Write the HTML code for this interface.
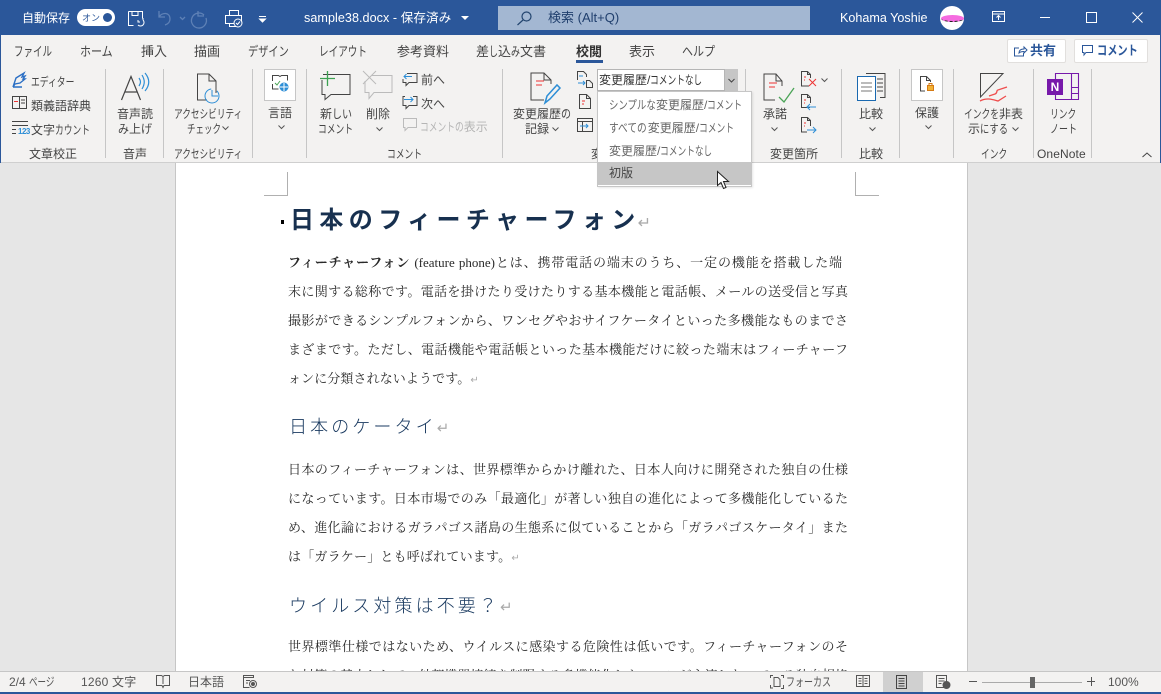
<!DOCTYPE html>
<html lang="ja"><head><meta charset="utf-8"><style>
html,body{margin:0;padding:0}
body{width:1161px;height:694px;overflow:hidden;position:relative;background:#e6e6e6;font-family:"Liberation Sans","Noto Sans CJK JP",sans-serif}
div,svg{position:absolute}
.t{white-space:nowrap;font-size:12px;line-height:16px;color:#444;letter-spacing:0}
.k{display:inline-block;width:calc(var(--n)*var(--w,8.75)*1px);white-space:nowrap}
.k i{display:inline-block;font-style:normal;transform-origin:0 50%;transform:scaleX(calc(var(--w,8.75)/var(--f,12)))}
.tab{--f:13;top:44px;font-size:13px;line-height:16px;color:#444;white-space:nowrap;letter-spacing:0}
.sep{width:1px;background:#c6c6c6;top:69px;height:89px}
.w{color:#fff}
.b{white-space:nowrap;left:288px;width:560px;font-family:"Liberation Serif","Noto Serif CJK SC",serif;font-size:13px;line-height:18px;color:#2a2a2a;text-align:justify;text-align-last:justify;font-weight:400}
.b b{font-weight:700}
.h{white-space:nowrap;left:289px;font-size:18px;line-height:24px;color:#1a3a60;letter-spacing:3.100px;font-weight:300}
.m{color:#aaa;font-size:10px}
svg{overflow:visible}
.ch{fill:none;stroke:#555}
</style></head><body>
<div style="left:0;top:0;width:1161px;height:35px;background:#2b579a"></div>
<div class="t w" style="left:22px;top:10px">自動保存</div>
<div style="left:77px;top:9px;width:38px;height:17px;background:#fff;border-radius:9px"></div>
<div class="t" style="left:82px;top:10px;font-size:9px;color:#2b579a">オン</div>
<div style="left:103px;top:13px;width:9px;height:9px;background:#2b579a;border-radius:50%"></div>
<svg style="left:128px;top:11px" width="16" height="16" fill="none" stroke="#fff"><path d="M.5.500h14v7M.5.500v14h5M4 .5v4h6v-4M10 14a3.500 3.500 0 0 0 5-5M15 9v-2M12 11h-2V9"/></svg>
<svg style="left:158px;top:10px" width="55" height="17" fill="none" stroke="#5e81b6" stroke-width="1.300"><path d="M1 1v6h6M1 7c3-5 11-5 11 2 0 3-2 5-5 6M22 7l2.500 2.500L27 7"/><path d="M40 1v5h6M46 5a7.500 7.500 0 1 0 2 3"/></svg>
<svg style="left:225px;top:10px" width="18" height="18" fill="none" stroke="#fff"><path d="M4.500 5V.5h9V5M.5 5.500h16v8h-16zM4.500 13.500v3h7"/><circle cx="13" cy="13" r="4" fill="#2b579a"/><path d="M11 13l1.500 1.500 2.500-3"/></svg>
<svg style="left:258px;top:16px" width="9" height="7" fill="none" stroke="#fff"><path d="M1 .5h7M1.500 3l3 3 3-3z" fill="#fff"/></svg>
<div class="t w" style="left:304px;top:10px;font-size:12.600px;letter-spacing:.05px">sample38.docx - 保存済み</div>
<svg style="left:461px;top:16px" width="8" height="5"><path d="M0 0h8L4 4z" fill="#fff"/></svg>
<div style="left:498px;top:6px;width:312px;height:24px;background:#a3b7d2"></div>
<svg style="left:517px;top:11px" width="16" height="15" fill="none" stroke="#23456f" stroke-width="1.200"><circle cx="9.500" cy="5.500" r="4.500"/><path d="M6 9l-5.500 5"/></svg>
<div class="t" style="left:548px;top:10px;color:#203f6d;font-size:13px">検索 (Alt+Q)</div>
<div class="t w" style="left:840px;top:10px;font-size:12.600px">Kohama Yoshie</div>
<div style="left:940px;top:6px;width:24px;height:24px;background:#fff;border-radius:50%"></div>
<div style="left:941px;top:15px;width:23px;height:7px;background:#f56be0;border-radius:50%;border-bottom:1px dashed #222;box-sizing:border-box"></div>
<svg style="left:992px;top:11px" width="13" height="12" fill="none" stroke="#fff"><path d="M.5.500h12v10H.500zM.5 3h12M6.500 9V4.500M4.500 6.500l2-2 2 2"/></svg>
<div style="left:1040px;top:17px;width:10px;height:1px;background:#fff"></div>
<div style="left:1086px;top:12px;width:9px;height:9px;border:1px solid #fff"></div>
<svg style="left:1132px;top:12px" width="11" height="11" stroke="#fff"><path d="M.5.500l10 10M10.500.5l-10 10"/></svg>

<div style="left:0;top:35px;width:1161px;height:127px;background:#f3f2f1;border-bottom:1px solid #cfcfcf"></div>
<div style="left:0;top:0;width:1px;height:694px;background:#2b579a"></div>
<div style="left:1160px;top:0;width:1px;height:694px;background:#2b579a"></div>

<div class="tab" style="left:14px"><span class="k" style="--n:4;--w:9.500"><i>ファイル</i></span></div>
<div class="tab" style="left:80px"><span class="k" style="--n:3;--w:11"><i>ホーム</i></span></div>
<div class="tab" style="left:141px">挿入</div>
<div class="tab" style="left:194px">描画</div>
<div class="tab" style="left:248px"><span class="k" style="--n:4;--w:10.200"><i>デザイン</i></span></div>
<div class="tab" style="left:319px"><span class="k" style="--n:5;--w:9.600"><i>レイアウト</i></span></div>
<div class="tab" style="left:397px">参考資料</div>
<div class="tab" style="left:476px">差<span class="k" style="--n:1;--w:9"><i>し</i></span>込<span class="k" style="--n:1;--w:9"><i>み</i></span>文書</div>
<div class="tab" style="left:576px;font-weight:700;color:#333">校閲</div>
<div style="left:576px;top:60px;width:27px;height:3px;background:#2b579a"></div>
<div class="tab" style="left:629px">表示</div>
<div class="tab" style="left:682px"><span class="k" style="--n:3;--w:11"><i>ヘルプ</i></span></div>
<div style="left:1007px;top:39px;width:57px;height:22px;background:#fff;border:1px solid #e1dfdd;border-radius:2px"></div>
<svg style="left:1014px;top:45px" width="14" height="12" fill="none" stroke="#2b579a"><path d="M5 3H.5v8h9V8M5 8c0-3 2-4 5-4V2l3 3-3 3V6.500C8 6.500 6 7 5 8z"/></svg>
<div class="t" style="left:1030px;top:43px;color:#2b579a;font-weight:700;font-size:13px">共有</div>
<div style="left:1074px;top:39px;width:72px;height:22px;background:#fff;border:1px solid #e1dfdd;border-radius:2px"></div>
<svg style="left:1082px;top:45px" width="12" height="12" fill="none" stroke="#2b579a"><path d="M.5.500h10v7H4L2 10V7.500H.5z"/></svg>
<div class="t" style="left:1097px;top:43px;color:#2b579a;font-weight:700;font-size:13px;--f:13"><span class="k" style="--n:4;--w:10.200"><i>コメント</i></span></div>

<div class="sep" style="left:105px"></div><div class="sep" style="left:163px"></div><div class="sep" style="left:252px"></div><div class="sep" style="left:306px"></div><div class="sep" style="left:502px"></div><div class="sep" style="left:745px"></div><div class="sep" style="left:841px"></div><div class="sep" style="left:899px"></div><div class="sep" style="left:953px"></div><div class="sep" style="left:1033px"></div><div class="sep" style="left:1091px"></div>

<!-- Proofing -->
<svg style="left:12px;top:72px" width="16" height="16" fill="none" stroke="#2b6fc4" stroke-width="1.400"><path d="M1 15l3-9 8-5-2 4 3-1-2 3 2 0-5 4-5 1zM1 15h9"/></svg>
<div class="t" style="left:31px;top:74px"><span class="k" style="--n:5;--w:8.800"><i>エディター</i></span></div>
<svg style="left:12px;top:96px" width="15" height="14" fill="none" stroke="#444"><path d="M.5.500h14v12H.500zM7.500.5v12M9 4h4M9 7h4"/><path d="M2 5.500h4" stroke="#e33"/></svg>
<div class="t" style="left:31px;top:98px">類義語辞典</div>
<svg style="left:12px;top:121px" width="18" height="14"><path d="M0 .5h16M0 4.500h16M0 8.500h4M0 12.500h4" stroke="#444"/></svg>
<div class="t" style="left:18px;top:128px;font-size:8px;line-height:8px;color:#2d8ed6;font-weight:700;letter-spacing:-.5px">123</div>
<div class="t" style="left:31px;top:122px">文字<span class="k" style="--n:4"><i>カウント</i></span></div>
<div class="t" style="left:29px;top:146px">文章校正</div>

<!-- Speech -->
<svg style="left:121px;top:76px" width="20" height="25" fill="none" stroke="#444" stroke-width="1.200"><path d="M.5 24L10 .5 19.500 24M4 16h12"/></svg>
<svg style="left:138px;top:72px" width="12" height="22" fill="none" stroke="#2d8ed6" stroke-width="1.200"><path d="M1 6c2 3 2 5 0 8M4 3c3 5 3 9 0 14M7 1c5 6 5 12 0 18"/></svg>
<div class="t" style="left:117px;top:106px">音声読</div>
<div class="t" style="left:118px;top:121px"><span class="k" style="--n:1;--w:11"><i>み</i></span>上<span class="k" style="--n:1;--w:11"><i>げ</i></span></div>
<div class="t" style="left:123px;top:146px">音声</div>

<!-- Accessibility -->
<svg style="left:197px;top:73px" width="30" height="32" fill="none" stroke="#444"><path d="M19 20V8l-7-7H.5v26H10M12 1v7h7"/><circle cx="15" cy="23" r="7" stroke="#2d8ed6" stroke-dasharray="32 6"/><path d="M15 17v6h6" stroke="#2d8ed6"/></svg>
<div class="t" style="left:174px;top:106px"><span class="k" style="--n:8;--w:8.650"><i>アクセシビリティ</i></span></div>
<div class="t" style="left:187px;top:121px"><span class="k" style="--n:4;--w:8.500"><i>チェック</i></span></div>
<svg class="ch" style="left:222px;top:126px" width="7" height="4"><path d="M.5.500L3.500 3.500 6.500.5"/></svg>
<div class="t" style="left:174px;top:146px"><span class="k" style="--n:8;--w:8.650"><i>アクセシビリティ</i></span></div>

<!-- Language -->
<div style="left:264px;top:69px;width:30px;height:30px;background:#fff;border:1px solid #c6c6c6"></div>
<svg style="left:272px;top:75px" width="17" height="17" fill="none" stroke="#444"><path d="M.5 6V.5h6l1.500 1 1.500-1h6v5M.5 9v5h6"/><path d="M3 8l2 2 3-4" stroke="#4aa457"/><circle cx="12" cy="12" r="4.500" fill="#2d8ed6" stroke="none"/><path d="M8 12h8M12 8v8" stroke="#fff"/></svg>
<div class="t" style="left:268px;top:105px">言語</div>
<svg class="ch" style="left:278px;top:125px" width="7" height="4"><path d="M.5.500L3.500 3.500 6.500.5"/></svg>

<!-- Comments -->
<svg style="left:320px;top:71px" width="32" height="30" fill="none" stroke="#444"><path d="M3 3.500h27v20H11l-6 5v-5H2V9"/><path d="M7.500 0v15M0 7.500h15" stroke="#3ca152" stroke-width="1.300"/></svg>
<div class="t" style="left:320px;top:106px">新<span class="k" style="--n:2;--w:10"><i>しい</i></span></div>
<div class="t" style="left:318px;top:121px"><span class="k" style="--n:4"><i>コメント</i></span></div>
<svg style="left:362px;top:71px" width="32" height="30" fill="none" stroke="#bbb"><path d="M10 4.500h20v17H12l-5 6v-6H3V10"/><path d="M1 0l13 13M14 0L1 13"/></svg>
<div class="t" style="left:366px;top:106px">削除</div>
<svg class="ch" style="left:376px;top:127px" width="7" height="4"><path d="M.5.500L3.500 3.500 6.500.5"/></svg>
<svg style="left:402px;top:72px" width="16" height="15" fill="none" stroke="#444"><path d="M5 1.500h10v9H7l-3 3v-3H1V7"/><path d="M10 4.500H2M4.500 2L2 4.500 4.500 7" stroke="#2d8ed6"/></svg>
<div class="t" style="left:421px;top:72px">前へ</div>
<svg style="left:402px;top:95px" width="16" height="15" fill="none" stroke="#444"><path d="M11 1.500h4v9H7l-3 3v-3H1v-9h2"/><path d="M2 4.500h9M8.500 2L11 4.500 8.500 7" stroke="#2d8ed6"/></svg>
<div class="t" style="left:421px;top:96px">次へ</div>
<svg style="left:403px;top:118px" width="14" height="14" fill="none" stroke="#bbb"><path d="M.5.500h13v9H5l-3 3v-3H.5z"/></svg>
<div class="t" style="left:420px;top:119px;color:#b5b5b5"><span class="k" style="--n:5"><i>コメントの</i></span>表示</div>
<div class="t" style="left:387px;top:146px"><span class="k" style="--n:4"><i>コメント</i></span></div>

<!-- Tracking -->
<svg style="left:530px;top:72px" width="30" height="32" fill="none" stroke="#444"><path d="M21 12V8l-7-7H1v27h13M14 1v7h7"/><path d="M6 9h8M6 13h6" stroke="#e33"/><path d="M15 31l2-7 10-11 3 3-10 11z" stroke="#2d8ed6" stroke-width="1.500"/></svg>
<div class="t" style="left:513px;top:106px">変更履歴<span class="k" style="--n:1;--w:10"><i>の</i></span></div>
<div class="t" style="left:525px;top:121px">記録</div>
<svg class="ch" style="left:552px;top:127px" width="7" height="4"><path d="M.5.500L3.500 3.500 6.500.5"/></svg>
<svg style="left:577px;top:71px" width="17" height="18" fill="none" stroke="#444"><path d="M.5 9V.5h6l3 3V6M9.500 9.500h3l3 3v4h-6z"/><path d="M1 12h7M6 10l2 2-2 2M2 5h4" stroke="#2d8ed6"/></svg>
<svg style="left:579px;top:94px" width="13" height="15" fill="none" stroke="#444"><path d="M.5.500h7l4 4v10h-11zM7.500.5v4h4"/><path d="M3 7h3M3 10h2" stroke="#e33"/></svg>
<svg style="left:577px;top:118px" width="16" height="14" fill="none" stroke="#444"><path d="M.5.500h15v13H.500zM.5 3.500h15M5.500 3.500v10"/><path d="M3 8h8M9 6l2 2-2 2" stroke="#2d8ed6"/></svg>
<div class="t" style="left:591px;top:146px">変更履歴</div>

<div style="left:597px;top:69px;width:126px;height:20px;background:#fff;border:1px solid #b5b5b5"></div>
<div class="t" style="left:599px;top:72px;color:#333">変更履歴/<span class="k" style="--n:4"><i>コメント</i></span><span class="k" style="--n:2;--w:8.500"><i>なし</i></span></div>
<div style="left:725px;top:69px;width:13px;height:22px;background:#c6c6c6"></div>
<svg style="left:728px;top:79px" width="7" height="4" fill="none" stroke="#444"><path d="M.5 0L3.500 3 6.500 0"/></svg>

<!-- Changes -->
<svg style="left:763px;top:73px" width="32" height="32" fill="none" stroke="#444"><path d="M19 13V8l-6-7H1v26h11M13 1v7h6"/><path d="M6 10h8M6 14h6" stroke="#e33"/><path d="M16 24l5 5 10-14" stroke="#4aa457" stroke-width="1.300"/></svg>
<div class="t" style="left:763px;top:106px">承諾</div>
<svg class="ch" style="left:771px;top:127px" width="7" height="4"><path d="M.5.500L3.500 3.500 6.500.5"/></svg>
<svg style="left:801px;top:71px" width="16" height="17" fill="none" stroke="#444"><path d="M8 15H.5V.5h6l3 3V7M6.500.5v3h3"/><path d="M3 6h2M3 9h1" stroke="#e33"/><path d="M8 8l7 7M15 8l-7 7" stroke="#e33"/></svg>
<svg class="ch" style="left:821px;top:78px" width="7" height="4"><path d="M.5.500L3.500 3.500 6.500.5"/></svg>
<svg style="left:801px;top:94px" width="16" height="17" fill="none" stroke="#444"><path d="M9 13.500H.5V.5h6l3 3V9M6.500.5v3h3"/><path d="M3 6h2M3 9h1" stroke="#e33"/><path d="M15 13H6M9 10l-3 3 3 3" stroke="#2d8ed6"/></svg>
<svg style="left:801px;top:117px" width="16" height="17" fill="none" stroke="#444"><path d="M6 15H.5V.5h6l3 3V9M6.500.5v3h3"/><path d="M3 6h2M3 9h1" stroke="#e33"/><path d="M6 13h9M12 10l3 3-3 3" stroke="#2d8ed6"/></svg>
<div class="t" style="left:770px;top:146px">変更箇所</div>

<!-- Compare -->
<svg style="left:857px;top:73px" width="29" height="26" fill="none" stroke="#444"><path d="M9 .5h19v24h-5M20 6h6M20 10h6M20 14h6M20 18h6"/><rect x=".5" y="3.500" width="18" height="24" fill="#fff" stroke="#1a69b0"/><path d="M4 10h11M4 14h11M4 18h11" stroke="#777"/></svg>
<div class="t" style="left:859px;top:106px">比較</div>
<svg class="ch" style="left:869px;top:127px" width="7" height="4"><path d="M.5.500L3.500 3.500 6.500.5"/></svg>
<div class="t" style="left:859px;top:146px">比較</div>

<!-- Protect -->
<div style="left:911px;top:69px;width:30px;height:30px;background:#fff;border:1px solid #c6c6c6"></div>
<svg style="left:920px;top:76px" width="16" height="16" fill="none" stroke="#444"><path d="M5 15H.5V.5h6l4 4V6M6.500.5v4h4"/><rect x="7.500" y="9.500" width="6" height="5" fill="#f2b233" stroke="#d57a14"/><path d="M9 9.500V7.500h3v2" stroke="#d57a14"/></svg>
<div class="t" style="left:915px;top:105px">保護</div>
<svg class="ch" style="left:925px;top:125px" width="7" height="4"><path d="M.5.500L3.500 3.500 6.500.5"/></svg>

<!-- Ink -->
<svg style="left:979px;top:73px" width="30" height="30" fill="none" stroke="#444"><path d="M1.500 24V.5H24z"/><path d="M1 28c7-4 14-1 18 0l8-5M10 23l6-2c3-1 1-4 3-4l9-3" stroke="#ef4d4d" stroke-width="1.300"/></svg>
<div class="t" style="left:964px;top:106px"><span class="k" style="--n:4"><i>インクを</i></span>非表</div>
<div class="t" style="left:968px;top:121px">示<span class="k" style="--n:3;--w:9.300"><i>にする</i></span></div>
<svg class="ch" style="left:1012px;top:127px" width="7" height="4"><path d="M.5.500L3.500 3.500 6.500.5"/></svg>
<div class="t" style="left:981px;top:146px"><span class="k" style="--n:3"><i>インク</i></span></div>

<!-- OneNote -->
<svg style="left:1047px;top:73px" width="32" height="29" fill="none" stroke="#7719aa"><path d="M8.500.5h23v26h-23zM24.500.5v26M24.500 14.500h7M24.500 20.500h7" stroke-width="1.100"/></svg>
<div style="left:1047px;top:79px;width:16px;height:16px;background:#7719aa;color:#fff;font-size:12px;font-weight:700;line-height:16px;text-align:center">N</div>
<div class="t" style="left:1050px;top:106px"><span class="k" style="--n:3"><i>リンク</i></span></div>
<div class="t" style="left:1050px;top:121px"><span class="k" style="--n:3;--w:9"><i>ノート</i></span></div>
<div class="t" style="left:1037px;top:146px;letter-spacing:.1px">OneNote</div>
<svg style="left:1142px;top:152px" width="10" height="6" fill="none" stroke="#444"><path d="M.5 5L5 1l4.500 4"/></svg>

<!-- Page -->
<div style="left:0;top:163px;width:1161px;height:508px;background:#e6e6e6"></div>
<div style="left:175px;top:163px;width:791px;height:508px;background:#fff;border-left:1px solid #c6c6c6;border-right:1px solid #c6c6c6"></div>
<div style="left:264px;top:172px;width:23px;height:23px;border-right:1px solid #b0b0b0;border-bottom:1px solid #b0b0b0"></div>
<div style="left:855px;top:172px;width:23px;height:23px;border-left:1px solid #b0b0b0;border-bottom:1px solid #b0b0b0"></div>

<div style="left:281px;top:220px;width:3px;height:4px;background:#000"></div>
<div class="h" style="top:206px;font-size:24px;line-height:30px;left:290px;font-weight:700;letter-spacing:5.400px;color:#17304f">日本のフィーチャーフォン<span class="m" style="font-size:16px;font-weight:400;color:#aaa;letter-spacing:0;margin-left:-3px">↵</span></div>
<div class="b" style="top:254px;width:554px"><b>フィーチャーフォン</b> (feature phone)とは、携帯電話の端末のうち、一定の機能を搭載した端</div>
<div class="b" style="top:283px">末に関する総称です。電話を掛けたり受けたりする基本機能と電話帳、メールの送受信と写真</div>
<div class="b" style="top:312px">撮影ができるシンプルフォンから、ワンセグやおサイフケータイといった多機能なものまでさ</div>
<div class="b" style="top:341px">まざまです。ただし、電話機能や電話帳といった基本機能だけに絞った端末はフィーチャーフ</div>
<div class="b" style="top:370px;width:auto;text-align-last:left;letter-spacing:.1px">ォンに分類されないようです。<span class="m">↵</span></div>
<div class="h" style="top:415px">日本のケータイ<span class="m" style="font-size:15px;letter-spacing:0">↵</span></div>
<div class="b" style="top:461px">日本のフィーチャーフォンは、世界標準からかけ離れた、日本人向けに開発された独自の仕様</div>
<div class="b" style="top:490px">になっています。日本市場でのみ「最適化」が著しい独自の進化によって多機能化しているた</div>
<div class="b" style="top:519px">め、進化論におけるガラパゴス諸島の生態系に似ていることから「ガラパゴスケータイ」また</div>
<div class="b" style="top:548px;width:auto;text-align-last:left;letter-spacing:.2px">は「ガラケー」とも呼ばれています。<span class="m">↵</span></div>
<div class="h" style="top:594px">ウイルス対策は不要？<span class="m" style="font-size:15px;letter-spacing:0">↵</span></div>
<div class="b" style="top:638px">世界標準仕様ではないため、ウイルスに感染する危険性は低いです。フィーチャーフォンのそ</div>
<div class="b" style="top:667px">な対策の基本として、外部機器接続を制限する多機能化したフォンが主流となっている独自規格</div>

<!-- Dropdown -->
<div style="left:597px;top:91px;width:153px;height:94px;background:#fff;border:1px solid #c6c6c6;box-shadow:1px 1px 2px rgba(0,0,0,.1)"></div>
<div class="t" style="left:609px;top:97px;color:#666"><span class="k" style="--n:5;--w:9.400"><i>シンプルな</i></span>変更履歴/<span class="k" style="--n:4"><i>コメント</i></span></div>
<div class="t" style="left:609px;top:120px;color:#666"><span class="k" style="--n:4;--w:9.700"><i>すべての</i></span>変更履歴/<span class="k" style="--n:4"><i>コメント</i></span></div>
<div class="t" style="left:609px;top:143px;color:#666">変更履歴/<span class="k" style="--n:4"><i>コメント</i></span><span class="k" style="--n:2;--w:8.500"><i>なし</i></span></div>
<div style="left:598px;top:162px;width:153px;height:23px;background:#c6c6c6"></div>
<div class="t" style="left:609px;top:165px">初版</div>
<svg style="left:717px;top:171px" width="13" height="20"><path d="M.5.500v14l3.500-3 2.500 6 2.500-1-2.500-6h5z" fill="#fff" stroke="#222"/></svg>

<!-- Status bar -->
<div style="left:0;top:671px;width:1161px;height:23px;background:#f3f2f1;border-top:1px solid #c6c6c6;box-sizing:border-box"></div>
<div style="left:0;top:692px;width:1161px;height:2px;background:#2b579a"></div>
<div class="t" style="left:9px;top:674px;color:#555">2/4 <span class="k" style="--n:3;--w:8.500"><i>ページ</i></span></div>
<div class="t" style="left:81px;top:674px;color:#555;letter-spacing:.2px">1260 文字</div>
<svg style="left:156px;top:675px" width="14" height="14" fill="none" stroke="#555"><path d="M.5.500h5l1.500 1 1.500-1h5v10H8l-1 2-1-2H.5zM7 1.500V9"/></svg>
<div class="t" style="left:188px;top:674px;color:#555">日本語</div>
<svg style="left:243px;top:675px" width="15" height="14" fill="none" stroke="#555"><path d="M.5.500h10v2H.5zM.5 2.500v10h6M3 5.500h4M3 8h2"/><circle cx="10" cy="9" r="3.500"/><circle cx="10" cy="9" r="1.500" fill="#555"/></svg>
<svg style="left:770px;top:675px" width="14" height="14" fill="none" stroke="#555"><path d="M.5 3V.5H3M.5 10v3H3M11 .5h2.500V3M11 13.500h2.500V10M4 2.500h4l2 2v7H4z"/></svg>
<div class="t" style="left:786px;top:674px;color:#555"><span class="k" style="--n:5;--w:9"><i>フォーカス</i></span></div>
<svg style="left:856px;top:675px" width="14" height="13" fill="none" stroke="#555"><path d="M.5.500h13v11H.500zM7 .5v11M2.500 3.500h3M2.500 6h3M2.500 8.500h3M8.500 3.500h3M8.500 6h3M8.500 8.500h3"/></svg>
<div style="left:883px;top:672px;width:40px;height:20px;background:#d0d0d0"></div>
<svg style="left:896px;top:675px" width="13" height="14" fill="none" stroke="#444"><path d="M.5.500h10v13H.500zM2.500 3.500h6M2.500 6h6M2.500 8.500h6M2.500 11h6"/></svg>
<svg style="left:936px;top:675px" width="15" height="14" fill="none" stroke="#555"><path d="M.5.500h10v12H.500zM2.500 3.500h6M2.500 6h6M2.500 8.500h3"/><circle cx="10.500" cy="10" r="3.500" fill="#555"/></svg>
<div style="left:969px;top:681px;width:8px;height:1px;background:#555"></div>
<div style="left:982px;top:682px;width:100px;height:1px;background:#aaa"></div>
<div style="left:1030px;top:677px;width:5px;height:11px;background:#666"></div>
<div style="left:1087px;top:681px;width:8px;height:1px;background:#555"></div>
<div style="left:1091px;top:677px;width:1px;height:9px;background:#555"></div>
<div class="t" style="left:1108px;top:674px;color:#555">100%</div>
</body></html>
